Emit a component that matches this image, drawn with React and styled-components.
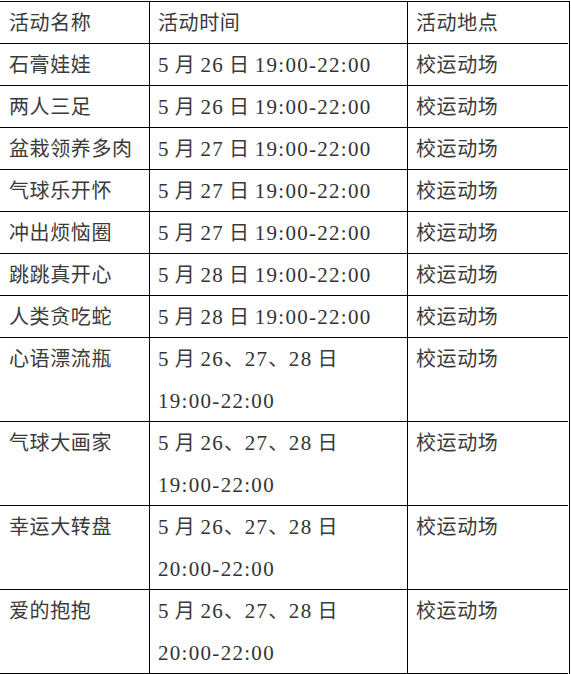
import React from 'react';
import styled, { createGlobalStyle } from 'styled-components';

const GlobalStyle = createGlobalStyle`
  html, body {
    margin: 0;
    padding: 0;
    background: #ffffff;
  }
  body {
    font-family: "Liberation Serif", "Noto Sans CJK SC", serif;
  }
`;

const Table = styled.div`
  margin-top: 1px;
  width: 569px;
  display: grid;
  grid-template-columns: 149px 258px 161px;
  border-top: 1px solid #000;
  border-right: 1px solid #000;
`;

const Cell = styled.div`
  box-sizing: border-box;
  height: ${(props) => (props.tall ? '84px' : '42px')};
  padding: 0 0 0 ${(props) => (props.first ? '9px' : '8px')};
  border-bottom: 1px solid #000;
  border-left: ${(props) => (props.first ? 'none' : '1px solid #000')};
  font-size: 20px;
  line-height: 42px;
  letter-spacing: 0.6px;
  color: #3a3a3a;
  white-space: nowrap;
`;

const Line = styled.div`
  height: 42px;
`;

// digits in the reference are a touch larger and wider set than the CJK text
const Num = styled.span`
  font-size: 21px;
  letter-spacing: 1.3px;
  color: #333;
`;

const Space = styled.span`
  display: inline-block;
  width: ${(props) => props.w}px;
`;

function Text({ value }) {
  const parts = value.split(/([0-9:\-]+| )/).filter((p) => p !== '');
  return parts.map((p, i) => {
    if (p === ' ') return <Space key={i} w={5} />;
    if (/^[0-9:\-]+$/.test(p)) return <Num key={i}>{p}</Num>;
    return <React.Fragment key={i}>{p}</React.Fragment>;
  });
}

const rows = [
  { name: '活动名称', time: ['活动时间'], place: '活动地点' },
  { name: '石膏娃娃', time: ['5 月 26 日 19:00-22:00'], place: '校运动场' },
  { name: '两人三足', time: ['5 月 26 日 19:00-22:00'], place: '校运动场' },
  { name: '盆栽领养多肉', time: ['5 月 27 日 19:00-22:00'], place: '校运动场' },
  { name: '气球乐开怀', time: ['5 月 27 日 19:00-22:00'], place: '校运动场' },
  { name: '冲出烦恼圈', time: ['5 月 27 日 19:00-22:00'], place: '校运动场' },
  { name: '跳跳真开心', time: ['5 月 28 日 19:00-22:00'], place: '校运动场' },
  { name: '人类贪吃蛇', time: ['5 月 28 日 19:00-22:00'], place: '校运动场' },
  { name: '心语漂流瓶', time: ['5 月 26、27、28 日', '19:00-22:00'], place: '校运动场' },
  { name: '气球大画家', time: ['5 月 26、27、28 日', '19:00-22:00'], place: '校运动场' },
  { name: '幸运大转盘', time: ['5 月 26、27、28 日', '20:00-22:00'], place: '校运动场' },
  { name: '爱的抱抱', time: ['5 月 26、27、28 日', '20:00-22:00'], place: '校运动场' },
];

export default function App() {
  return (
    <>
      <GlobalStyle />
      <Table>
        {rows.map((row) => {
          const tall = row.time.length > 1;
          return (
            <React.Fragment key={row.name}>
              <Cell first tall={tall}>{row.name}</Cell>
              <Cell tall={tall}>
                {row.time.map((t) => (
                  <Line key={t}>
                    <Text value={t} />
                  </Line>
                ))}
              </Cell>
              <Cell tall={tall}>{row.place}</Cell>
            </React.Fragment>
          );
        })}
      </Table>
    </>
  );
}
